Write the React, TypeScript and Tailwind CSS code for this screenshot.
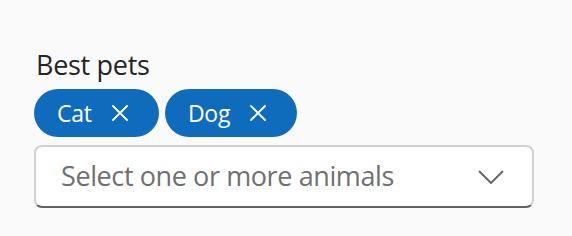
import { useState } from "react";

const font = { fontFamily: '"Segoe UI", "Open Sans", sans-serif' };

function Dismiss() {
  return (
    <svg width="16" height="16" viewBox="0 0 16 16" fill="none">
      <path d="M1 1L15 15M15 1L1 15" stroke="currentColor" strokeWidth="1.8" strokeLinecap="round" />
    </svg>
  );
}

export default function App() {
  const [pets, setPets] = useState(["Cat", "Dog"]);

  return (
    <div className="h-[236px] w-[572px] bg-[#fafafa] px-[34px] pt-[45px]" style={font}>
      <div className="text-[27px] leading-[40px] tracking-[-0.3px] text-[#242424] pl-[2px]">Best pets</div>

      {/* Selected tags */}
      <div className="mt-[4px] flex gap-[6px]">
        {pets.map((p) => (
          <button
            key={p}
            onClick={() => setPets(pets.filter((x) => x !== p))}
            className="flex h-[48px] items-center rounded-full bg-[#0f6cbd] pl-[23px] pr-[31px] text-[23px] tracking-[-0.2px] text-white"
          >
            <span className="leading-none">{p}</span>
            <span className="ml-[20px] flex">
              <Dismiss />
            </span>
          </button>
        ))}
      </div>

      {/* Combobox */}
      <div className="mt-[8px] flex h-[63px] w-[500px] items-center rounded-[8px] border-2 border-[#d1d1d1] border-b-[#616161] bg-white pl-[25px] pr-[28px]">
        <span className="flex-1 text-[27px] tracking-[-0.4px] text-[#707070]">Select one or more animals</span>
        <svg width="26" height="14" viewBox="0 0 26 14" fill="none">
          <path d="M1 1L13 13L25 1" stroke="#616161" strokeWidth="1.8" />
        </svg>
      </div>
    </div>
  );
}
